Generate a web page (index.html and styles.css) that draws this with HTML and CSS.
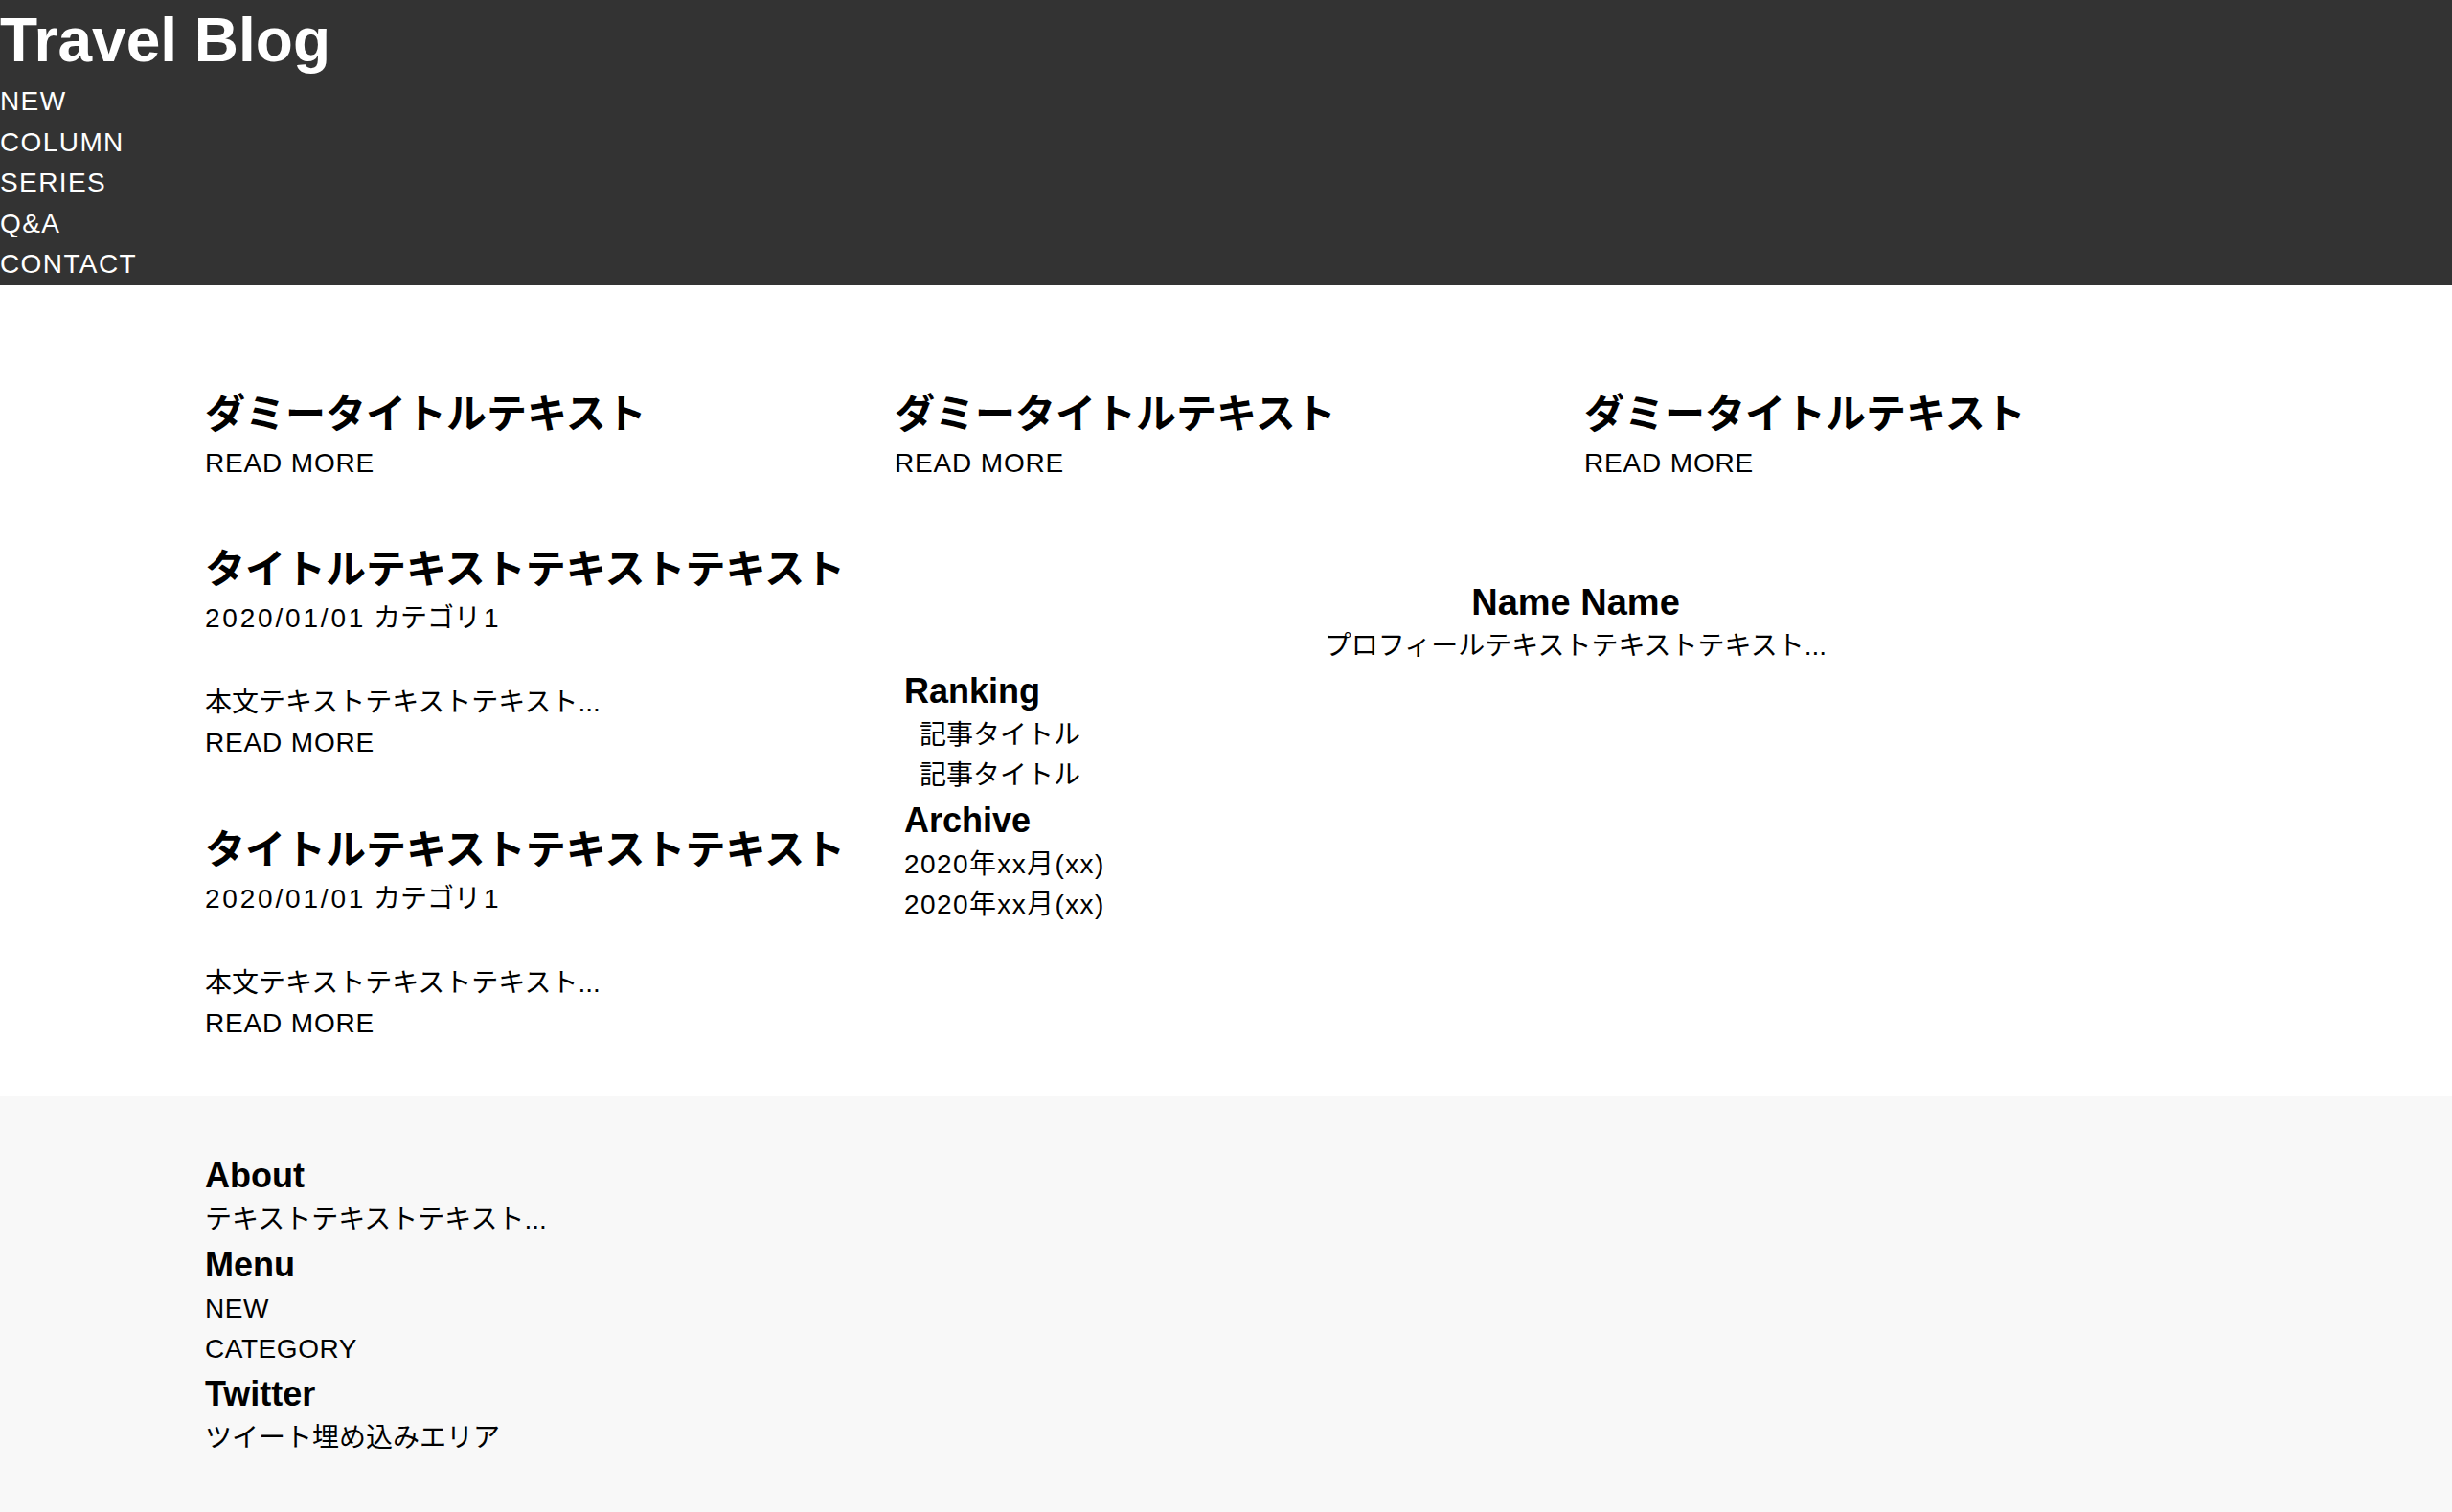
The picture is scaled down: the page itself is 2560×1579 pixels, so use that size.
FILE: index.html
```html
<!DOCTYPE html>
<html lang="ja">
<head>
<meta charset="utf-8">
<title>Travel Blog</title>
<link rel="stylesheet" href="styles.css">
</head>
<body>
<header class="site-header">
  <h1 class="site-title">Travel Blog</h1>
  <nav class="global-nav">
    <ul class="nav-list">
      <li><a href="#">NEW</a></li>
      <li><a href="#">COLUMN</a></li>
      <li><a href="#">SERIES</a></li>
      <li><a href="#">Q&amp;A</a></li>
      <li><a href="#">CONTACT</a></li>
    </ul>
  </nav>
</header>

<main class="main">
  <section class="pickup">
    <article class="card">
      <h2 class="card-title">ダミータイトルテキスト</h2>
      <a class="read-more" href="#">READ MORE</a>
    </article>
    <article class="card">
      <h2 class="card-title">ダミータイトルテキスト</h2>
      <a class="read-more" href="#">READ MORE</a>
    </article>
    <article class="card">
      <h2 class="card-title">ダミータイトルテキスト</h2>
      <a class="read-more" href="#">READ MORE</a>
    </article>
  </section>

  <div class="content">
    <div class="posts">
      <article class="post">
        <h2 class="post-title">タイトルテキストテキストテキスト</h2>
        <p class="post-meta"><time class="post-date">2020/01/01</time> <span class="post-cat">カテゴリ<span class="num">1</span></span></p>
        <p class="post-excerpt">本文テキストテキストテキスト...</p>
        <a class="read-more" href="#">READ MORE</a>
      </article>
      <article class="post">
        <h2 class="post-title">タイトルテキストテキストテキスト</h2>
        <p class="post-meta"><time class="post-date">2020/01/01</time> <span class="post-cat">カテゴリ<span class="num">1</span></span></p>
        <p class="post-excerpt">本文テキストテキストテキスト...</p>
        <a class="read-more" href="#">READ MORE</a>
      </article>
    </div>

    <aside class="sidebar">
      <div class="profile">
        <h3 class="profile-name">Name Name</h3>
        <p class="profile-text">プロフィールテキストテキストテキスト...</p>
      </div>
      <section class="widget">
        <h3 class="widget-title">Ranking</h3>
        <ul class="ranking-list">
          <li><a href="#">記事タイトル</a></li>
          <li><a href="#">記事タイトル</a></li>
        </ul>
      </section>
      <section class="widget">
        <h3 class="widget-title">Archive</h3>
        <ul class="archive-list">
          <li><a href="#">2020年xx月(xx)</a></li>
          <li><a href="#">2020年xx月(xx)</a></li>
        </ul>
      </section>
    </aside>
  </div>
</main>

<footer class="site-footer">
  <div class="footer-inner">
    <section class="footer-block">
      <h3 class="widget-title">About</h3>
      <p class="footer-text">テキストテキストテキスト...</p>
    </section>
    <section class="footer-block">
      <h3 class="widget-title">Menu</h3>
      <ul class="footer-menu">
        <li><a href="#">NEW</a></li>
        <li><a href="#">CATEGORY</a></li>
      </ul>
    </section>
    <section class="footer-block">
      <h3 class="widget-title">Twitter</h3>
      <p class="footer-text">ツイート埋め込みエリア</p>
    </section>
  </div>
</footer>
</body>
</html>
```

FILE: styles.css
```css
* {
  box-sizing: border-box;
}

html, body {
  margin: 0;
  padding: 0;
}

body {
  font-family: "Liberation Sans", "Noto Sans CJK JP", sans-serif;
  font-size: 28px;
  line-height: 42px;
  color: #000;
  background: #fff;
  min-height: 100vh;
  display: flex;
  flex-direction: column;
}

a {
  color: inherit;
  text-decoration: none;
}

ul {
  list-style: none;
  margin: 0;
  padding: 0;
}

p, h1, h2, h3 {
  margin: 0;
}

/* Header */
.site-header {
  background: #333;
  color: #fff;
}

.site-title {
  font-size: 64px;
  line-height: 85px;
  font-weight: bold;
}

.nav-list li {
  line-height: 42.5px;
  letter-spacing: 0.05em;
}

/* Main */
.main {
  padding: 105.5px 0 54.5px 214px;
}

.pickup {
  display: grid;
  grid-template-columns: repeat(3, 720px);
  margin-bottom: 60px;
}

.card-title,
.post-title {
  font-size: 42px;
  line-height: 60px;
  font-weight: bold;
}

.read-more {
  display: block;
  letter-spacing: 0.03em;
}

.content {
  display: grid;
  grid-template-columns: 730px 1402px;
  align-items: start;
}

.posts {
  display: flex;
  flex-direction: column;
  gap: 61px;
}

.post-date {
  letter-spacing: 0.1em;
}

.post-cat .num {
  padding-left: 3px;
}

.post-excerpt {
  margin-top: 46px;
}

/* Sidebar */
.sidebar {
  padding-top: 39px;
}

.profile {
  text-align: center;
}

.profile-name {
  font-size: 38px;
  line-height: 50px;
  font-weight: bold;
}

.widget-title {
  font-size: 36px;
  line-height: 51px;
  font-weight: bold;
}

.ranking-list {
  padding-left: 16px;
}

.archive-list li {
  letter-spacing: 0.05em;
}

/* Footer */
.site-footer {
  background: #f8f8f8;
  flex-grow: 1;
}

.footer-inner {
  padding: 57.4px 0 57px 214px;
}

.footer-menu li {
  letter-spacing: 0.02em;
}
```
